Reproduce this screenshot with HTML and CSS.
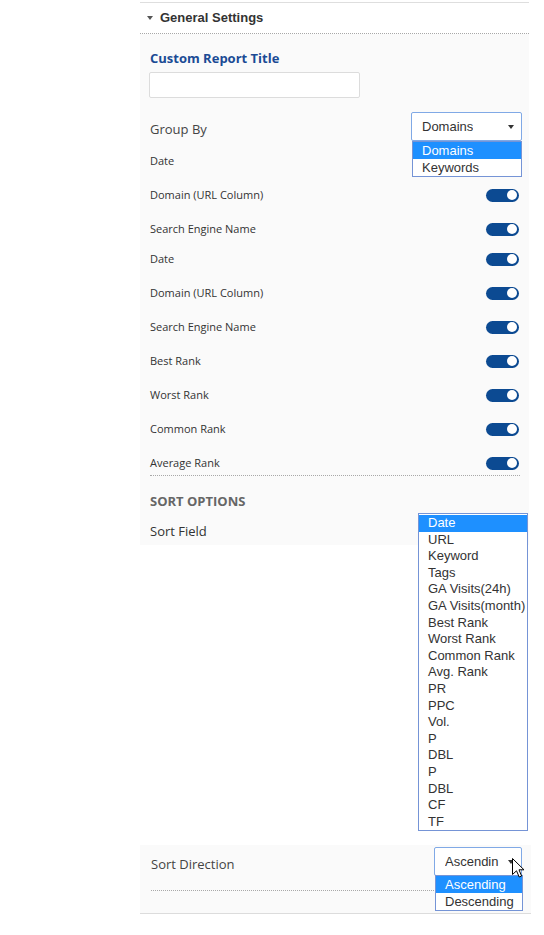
FILE: index.html
```html
<!DOCTYPE html>
<html>
<head>
<meta charset="utf-8">
<link rel="stylesheet" href="styles.css">
</head>
<body>
<div class="frame">
  <div class="section-head"><span class="caret"></span><span class="head-text">General Settings</span></div>
  <div class="panel">
    <div class="field-title">Custom Report Title</div>
    <input class="text-input" type="text">
    <div class="group-row">
      <span class="big-label">Group By</span>
      <div class="select select-group">
        <span class="select-text">Domains</span><span class="select-arrow"></span>
        <div class="listbox listbox-group">
          <div class="opt opt-sel">Domains</div>
          <div class="opt">Keywords</div>
        </div>
      </div>
    </div>
    <div class="toggles toggles-a">
      <div class="t-row"><span class="t-label">Date</span><span class="toggle"><span class="knob"></span></span></div>
      <div class="t-row"><span class="t-label">Domain (URL Column)</span><span class="toggle"><span class="knob"></span></span></div>
      <div class="t-row"><span class="t-label">Search Engine Name</span><span class="toggle"><span class="knob"></span></span></div>
    </div>
    <div class="toggles toggles-b">
      <div class="t-row"><span class="t-label">Date</span><span class="toggle"><span class="knob"></span></span></div>
      <div class="t-row"><span class="t-label">Domain (URL Column)</span><span class="toggle"><span class="knob"></span></span></div>
      <div class="t-row"><span class="t-label">Search Engine Name</span><span class="toggle"><span class="knob"></span></span></div>
      <div class="t-row"><span class="t-label">Best Rank</span><span class="toggle"><span class="knob"></span></span></div>
      <div class="t-row"><span class="t-label">Worst Rank</span><span class="toggle"><span class="knob"></span></span></div>
      <div class="t-row"><span class="t-label">Common Rank</span><span class="toggle"><span class="knob"></span></span></div>
      <div class="t-row"><span class="t-label">Average Rank</span><span class="toggle"><span class="knob"></span></span></div>
    </div>
    <div class="sort-head">SORT OPTIONS</div>
    <div class="sort-row">
      <span class="big-label">Sort Field</span>
      <div class="listbox listbox-sort">
        <div class="opt opt-sel">Date</div>
        <div class="opt">URL</div>
        <div class="opt">Keyword</div>
        <div class="opt">Tags</div>
        <div class="opt">GA Visits(24h)</div>
        <div class="opt">GA Visits(month)</div>
        <div class="opt">Best Rank</div>
        <div class="opt">Worst Rank</div>
        <div class="opt">Common Rank</div>
        <div class="opt">Avg. Rank</div>
        <div class="opt">PR</div>
        <div class="opt">PPC</div>
        <div class="opt">Vol.</div>
        <div class="opt">P</div>
        <div class="opt">DBL</div>
        <div class="opt">P</div>
        <div class="opt">DBL</div>
        <div class="opt">CF</div>
        <div class="opt">TF</div>
      </div>
    </div>
  </div>
  <div class="spacer"></div>
  <div class="dir-block">
    <div class="dir-row">
      <span class="big-label dir-label">Sort Direction</span>
      <div class="select select-dir">
        <span class="select-text dir-text">Ascendin</span><span class="select-arrow"></span>
        <div class="listbox listbox-dir">
          <div class="opt opt-sel">Ascending</div>
          <div class="opt">Descending</div>
        </div>
        <svg class="cursor" width="13" height="20" viewBox="0 0 13 20"><path d="M0.5 0.5 L0.5 16.5 L4.5 12.8 L7.2 19 L9.6 18 L7 11.8 L12 11.8 Z" fill="#fff" stroke="#000" stroke-width="1" stroke-linejoin="miter"/></svg>
      </div>
    </div>
    <div class="dir-line"></div>
  </div>
</div>
</body>
</html>
```

FILE: styles.css
```css
html, body {
  margin: 0;
  padding: 0;
  background: #ffffff;
}

.frame {
  margin: 2px 0 0 140px;
  width: 389px;
  border-top: 1px solid #dedede;
}

.section-head {
  display: flex;
  align-items: center;
  padding-bottom: 2px;
  box-sizing: border-box;
  border-bottom: 1px dotted #a8a8a8;
  height: 31px;
}

.caret {
  width: 0;
  height: 0;
  border-left: 3px solid transparent;
  border-right: 3px solid transparent;
  border-top: 4px solid #555;
  margin: 1px 7px 0 7px;
}

.head-text {
  font-family: "Liberation Sans", Arial, sans-serif;
  font-weight: bold;
  font-size: 13px;
  color: #333;
}

.panel {
  background: #fafafa;
  padding: 15px 7px 4px 10px;
}

.field-title {
  font-family: "Open Sans", sans-serif;
  font-weight: bold;
  font-size: 13px;
  line-height: 18px;
  color: #1b4b95;
}

.text-input {
  display: block;
  margin: 5px 0 0 -1px;
  width: 211px;
  height: 26px;
  box-sizing: border-box;
  border: 1px solid #dcdcdc;
  border-radius: 2px;
  background: #fff;
  outline: none;
  padding: 0;
}

.group-row {
  margin-top: 14px;
  height: 30px;
  display: flex;
  justify-content: space-between;
  align-items: center;
}

.big-label {
  font-family: "Open Sans", sans-serif;
  font-size: 13px;
  color: #444;
  line-height: 20px;
}

.group-row .big-label {
  padding-top: 4px;
}

.select {
  position: relative;
  box-sizing: border-box;
  border: 1px solid #80a9e6;
  border-radius: 2px;
  background: #fff;
  display: flex;
  align-items: center;
  font-family: "Liberation Sans", Arial, sans-serif;
  font-size: 13px;
  color: #333;
}

.select-group {
  width: 111px;
  height: 29px;
  padding-left: 10px;
  margin-top: -1px;
}

.select-text {
  white-space: nowrap;
  overflow: hidden;
}

.select-arrow {
  position: absolute;
  right: 7px;
  top: 12px;
  width: 0;
  height: 0;
  border-left: 3px solid transparent;
  border-right: 3px solid transparent;
  border-top: 4px solid #333;
}

.listbox {
  position: absolute;
  z-index: 5;
  background: #fff;
  border: 1px solid #7594d6;
  box-sizing: border-box;
  font-family: "Liberation Sans", Arial, sans-serif;
  font-size: 13px;
  color: #333;
}

.opt {
  height: 17px;
  line-height: 17px;
  padding-left: 9px;
  white-space: nowrap;
}

.opt-sel {
  background: #1e90ff;
  color: #fff;
}

.listbox-group {
  top: 28px;
  left: 0px;
  width: 110px;
}

.toggles {
  display: flex;
  flex-direction: column;
  gap: 10px;
}

.toggles-a {
  margin-top: 7px;
}

.toggles-b {
  margin-top: 6px;
  margin-right: 2px;
  border-bottom: 1px dotted #a8a8a8;
}

.t-row {
  height: 24px;
  display: flex;
  align-items: center;
  justify-content: space-between;
}

.t-label {
  font-family: "Open Sans", sans-serif;
  font-size: 11px;
  line-height: 15px;
  color: #333;
  margin-top: -1px;
}

.toggle {
  width: 33px;
  height: 13px;
  border-radius: 7px;
  background: #0c4a92;
  display: flex;
  align-items: center;
  justify-content: flex-end;
  padding-right: 2px;
  box-sizing: border-box;
  margin-right: 3px;
}

.toggles-b .toggle {
  margin-right: 1px;
}

.knob {
  width: 10px;
  height: 10px;
  border-radius: 50%;
  background: #fff;
}

.sort-head {
  margin-top: 16px;
  font-family: "Open Sans", sans-serif;
  font-weight: bold;
  font-size: 13px;
  line-height: 18px;
  color: #666;
}

.sort-row {
  position: relative;
  margin-top: 11px;
  height: 20px;
  display: flex;
  align-items: center;
}

.sort-row .big-label {
  color: #333;
}

.listbox-sort {
  top: -8px;
  right: -6px;
  width: 110px;
  padding: 1px 0 0 0;
}

.listbox-sort .opt {
  height: 16.6px;
  line-height: 16.6px;
}

.spacer {
  height: 300px;
}

.dir-block {
  background: #fafafa;
  padding: 2px 9px 22px 11px;
  border-bottom: 1px solid #dcdcdc;
  width: 391px;
  box-sizing: border-box;
}

.dir-row {
  height: 30px;
  display: flex;
  justify-content: space-between;
  align-items: center;
}

.dir-label {
  padding-top: 4px;
}

.select-dir {
  width: 88px;
  height: 29px;
  padding-left: 10px;
  margin-top: -1px;
}

.dir-text {
  width: 56px;
}

.listbox-dir {
  top: 27px;
  left: 0px;
  width: 88px;
}

.cursor {
  position: absolute;
  left: 77px;
  top: 10px;
  z-index: 6;
}

.dir-line {
  margin-top: 13px;
  border-top: 1px dotted #a8a8a8;
}
```
